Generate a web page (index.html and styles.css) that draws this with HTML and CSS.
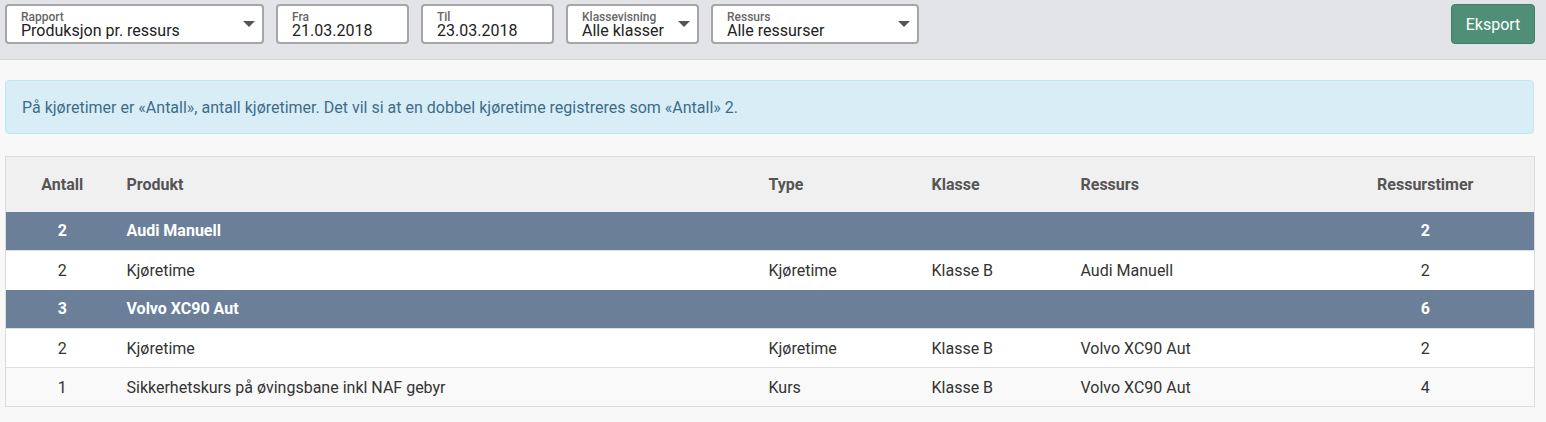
FILE: index.html
```html
<!DOCTYPE html>
<html lang="no">
<head>
<meta charset="utf-8">
<title>Rapport</title>
<link rel="stylesheet" href="styles.css">
</head>
<body>
<div class="topbar">
  <div class="filters">
    <div class="field w-rapport">
      <div class="txt"><span class="lbl">Rapport</span><span class="val">Produksjon pr. ressurs</span></div>
      <span class="caret"></span>
    </div>
    <div class="field w-date">
      <div class="txt"><span class="lbl">Fra</span><span class="val">21.03.2018</span></div>
    </div>
    <div class="field w-date">
      <div class="txt"><span class="lbl">Til</span><span class="val">23.03.2018</span></div>
    </div>
    <div class="field w-date">
      <div class="txt"><span class="lbl">Klassevisning</span><span class="val">Alle klasser</span></div>
      <span class="caret"></span>
    </div>
    <div class="field w-ressurs">
      <div class="txt"><span class="lbl">Ressurs</span><span class="val">Alle ressurser</span></div>
      <span class="caret"></span>
    </div>
  </div>
  <button class="btn-export">Eksport</button>
</div>
<main class="content">
  <div class="alert">På kjøretimer er «Antall», antall kjøretimer. Det vil si at en dobbel kjøretime registreres som «Antall» 2.</div>
  <table class="report">
    <colgroup>
      <col class="c1"><col class="c2"><col class="c3"><col class="c4"><col class="c5"><col class="c6">
    </colgroup>
    <thead>
      <tr><th class="center">Antall</th><th>Produkt</th><th>Type</th><th>Klasse</th><th>Ressurs</th><th class="center">Ressurstimer</th></tr>
    </thead>
    <tbody>
      <tr class="group"><td class="center">2</td><td>Audi Manuell</td><td></td><td></td><td></td><td class="center">2</td></tr>
      <tr class="row"><td class="center">2</td><td>Kjøretime</td><td>Kjøretime</td><td>Klasse B</td><td>Audi Manuell</td><td class="center">2</td></tr>
      <tr class="group"><td class="center">3</td><td>Volvo XC90 Aut</td><td></td><td></td><td></td><td class="center">6</td></tr>
      <tr class="row"><td class="center">2</td><td>Kjøretime</td><td>Kjøretime</td><td>Klasse B</td><td>Volvo XC90 Aut</td><td class="center">2</td></tr>
      <tr class="row alt"><td class="center">1</td><td>Sikkerhetskurs på øvingsbane inkl NAF gebyr</td><td>Kurs</td><td>Klasse B</td><td>Volvo XC90 Aut</td><td class="center">4</td></tr>
    </tbody>
  </table>
</main>
</body>
</html>
```
FILE: styles.css
```css
* { box-sizing: border-box; }
html, body { margin: 0; padding: 0; }
body {
  background: #f8f8f8;
  font-family: Roboto, "Liberation Sans", Arial, sans-serif;
  color: #333;
}
.topbar {
  display: flex;
  justify-content: space-between;
  align-items: flex-start;
  height: 60px;
  padding: 4px 11px 0 5px;
  background: #e2e4e8;
  border-bottom: 1px solid #d6d8dc;
}
.filters {
  display: flex;
  gap: 12px;
}
.field {
  position: relative;
  height: 40px;
  background: #fff;
  border: 2px solid #a6a6a6;
  border-radius: 4px;
  display: flex;
  align-items: center;
  padding: 0 0 0 14px;
}
.w-rapport { width: 259px; }
.w-date { width: 133px; }
.w-ressurs { width: 208px; }
.txt {
  display: flex;
  flex-direction: column;
  margin-top: 3px;
}
.lbl {
  font-size: 12px;
  line-height: 10px;
  color: #666;
  font-weight: 500;
}
.val {
  font-size: 16px;
  line-height: 17px;
  color: #222;
}
.caret {
  position: absolute;
  right: 7px;
  top: 15px;
  width: 0;
  height: 0;
  border-left: 6px solid transparent;
  border-right: 6px solid transparent;
  border-top: 6px solid #555;
}
.btn-export {
  height: 40px;
  width: 84px;
  background: #4f8f77;
  color: #fff;
  border: 1px solid #3f7d66;
  border-radius: 4px;
  font-family: Roboto, "Liberation Sans", Arial, sans-serif;
  font-size: 16px;
  padding: 0;
}
.content {
  padding: 20px 12px 0 5px;
}
.alert {
  background: #d9edf7;
  border: 1px solid #bce8f1;
  border-radius: 4px;
  color: #3b6d8a;
  font-size: 16px;
  height: 54px;
  padding: 0 16px;
  display: flex;
  align-items: center;
}
.report {
  margin-top: 22px;
  width: 1529px;
  border-collapse: collapse;
  border: 1px solid #dcdcdc;
  table-layout: fixed;
  font-size: 16px;
}
.c1 { width: 113px; }
.c2 { width: 642px; }
.c3 { width: 163px; }
.c4 { width: 149px; }
.c5 { width: 244px; }
.c6 { width: 218px; }
.report th, .report td {
  padding: 0 8px;
  text-align: left;
  white-space: nowrap;
}
.report .center { text-align: center; }
.report thead tr {
  background: #f0f0f0;
  height: 55px;
}
.report th {
  font-weight: 700;
  color: #555;
}
.report tbody tr { height: 39px; }
.report tr.group {
  background: #6b7f99;
  color: #fff;
  font-weight: 700;
}
.report tr.row {
  background: #fff;
  border-top: 1px solid #dddddd;
}
.report tr.row.alt { background: #f9f9f9; }
```
